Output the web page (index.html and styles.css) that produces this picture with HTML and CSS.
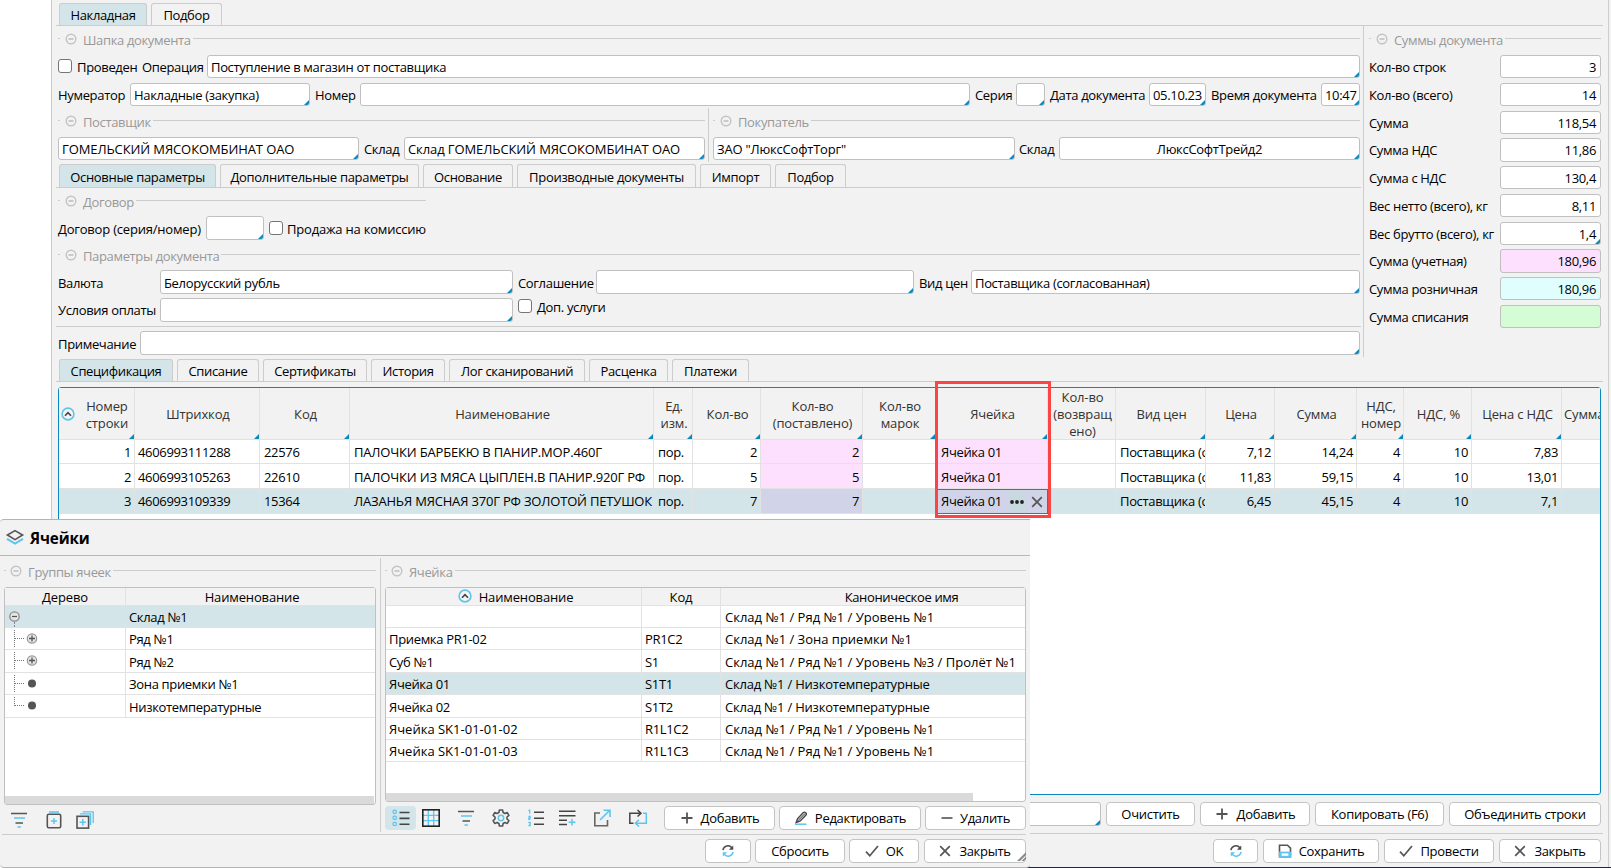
FILE: index.html
```html
<!DOCTYPE html>
<html lang="ru">
<head>
<meta charset="utf-8">
<title>Накладная</title>
<link rel="stylesheet" href="styles.css">
</head>
<body>
<svg width="0" height="0" class="defs">
  <symbol id="minus-c" viewBox="0 0 12 12"><circle cx="6" cy="6" r="4.8" fill="none" stroke="#c4c4c4" stroke-width="1.4"/><path d="M3.5 6h5" stroke="#b4b4b4" stroke-width="1.3"/></symbol>
  <symbol id="sort" viewBox="0 0 14 14"><circle cx="7" cy="7" r="5.9" fill="#f4f4f4" stroke="#62c3ec" stroke-width="1.6"/><path d="M4 8.8 7 5.6l3 3.2" fill="none" stroke="#444" stroke-width="1.6"/></symbol>
  <symbol id="refresh" viewBox="0 0 16 16"><g fill="none" stroke-width="1.7"><path d="M2.2 7A5.8 5.8 0 0 1 12.4 4.2" stroke="#4a4a4a"/><path d="M13.8 9A5.8 5.8 0 0 1 3.6 11.8" stroke="#5cc5f0"/></g><path d="M14 1.6v5H9z" fill="#4a4a4a"/><path d="M2 14.4v-5h5z" fill="#5cc5f0"/></symbol>
  <symbol id="plus" viewBox="0 0 14 14"><path d="M7 1.5v11M1.5 7h11" stroke="#555" stroke-width="1.8"/></symbol>
  <symbol id="cross" viewBox="0 0 12 12"><path d="M1.2 1.2l9.6 9.6M10.8 1.2 1.2 10.8" stroke="#555" stroke-width="1.7"/></symbol>
  <symbol id="check" viewBox="0 0 14 14"><path d="M1 7.6l3.8 4.2L13 2" fill="none" stroke="#555" stroke-width="1.7"/></symbol>
  <symbol id="funnel" viewBox="0 0 18 18"><path d="M1 2.5h16M5.500 12h7.500" stroke="#555" stroke-width="1.5"/><path d="M4 7h11M7.500 16h3.4" stroke="#5cc5f0" stroke-width="1.5"/></symbol>
</svg>

<div class="doc">
  <div class="tabs tabs-1"><span class="tab on w88">Накладная</span><span class="tab w71">Подбор</span></div>
  <div class="top">
    <div class="left">
      <div class="legend"><i></i><svg><use href="#minus-c"/></svg><b>Шапка документа</b><hr></div>
      <div class="row r-oper"><span class="chk"></span><label>Проведен</label><label>Операция</label><div class="inp mk">Поступление в магазин от поставщика</div></div>
      <div class="row r-num"><label>Нумератор</label><div class="inp mk">Накладные (закупка)</div><label>Номер</label><div class="inp mk"></div><label>Серия</label><div class="inp mk"></div><label>Дата документа</label><div class="inp mk tight">05.10.23</div><label>Время документа</label><div class="inp mk tight">10:47</div></div>
      <div class="parties">
        <div class="party">
          <div class="legend"><i></i><svg><use href="#minus-c"/></svg><b>Поставщик</b><hr></div>
          <div class="row r-sup"><div class="inp mk caps">ГОМЕЛЬСКИЙ МЯСОКОМБИНАТ ОАО</div><label>Склад</label><div class="inp mk caps">Склад ГОМЕЛЬСКИЙ МЯСОКОМБИНАТ ОАО</div></div>
        </div>
        <div class="party second">
          <div class="legend"><i></i><svg><use href="#minus-c"/></svg><b>Покупатель</b><hr></div>
          <div class="row r-buy"><div class="inp mk wide">ЗАО "ЛюксСофтТорг"</div><label>Склад</label><div class="inp mk mid">ЛюксСофтТрейд2</div></div>
        </div>
      </div>
      <div class="tabs tabs-2"><span class="tab on w157">Основные параметры</span><span class="tab w199">Дополнительные параметры</span><span class="tab w90">Основание</span><span class="tab w179">Производные документы</span><span class="tab w71">Импорт</span><span class="tab w71">Подбор</span></div>
      <div class="legend lg-dog"><i></i><svg><use href="#minus-c"/></svg><b>Договор</b><hr></div>
      <div class="row r-dog"><label class="wide">Договор (серия/номер)</label><div class="inp mk"></div><span class="chk"></span><label class="wide">Продажа на комиссию</label></div>
      <div class="legend lg-par"><i></i><svg><use href="#minus-c"/></svg><b>Параметры документа</b><hr></div>
      <div class="row r-cur"><label>Валюта</label><div class="inp mk">Белорусский рубль</div><label>Соглашение</label><div class="inp mk"></div><label>Вид цен</label><div class="inp mk">Поставщика (согласованная)</div></div>
      <div class="row r-pay"><label>Условия оплаты</label><div class="inp mk"></div><span class="chk"></span><label class="up">Доп. услуги</label></div>
      <div class="sep"></div>
      <div class="row r-note"><label>Примечание</label><div class="inp mk"></div></div>
    </div>
    <div class="sums">
      <div class="legend"><i></i><svg><use href="#minus-c"/></svg><b>Суммы документа</b><hr></div>
      <div class="sumgrid">
        <label>Кол-во строк</label><div class="inp num">3</div>
        <label>Кол-во (всего)</label><div class="inp num">14</div>
        <label>Сумма</label><div class="inp num">118,54</div>
        <label>Сумма НДС</label><div class="inp num">11,86</div>
        <label>Сумма с НДС</label><div class="inp num">130,4</div>
        <label>Вес нетто (всего), кг</label><div class="inp num">8,11</div>
        <label>Вес брутто (всего), кг</label><div class="inp num mk">1,4</div>
        <label>Сумма (учетная)</label><div class="inp num pink">180,96</div>
        <label>Сумма розничная</label><div class="inp num cyan">180,96</div>
        <label>Сумма списания</label><div class="inp num green"></div>
      </div>
    </div>
  </div>
  <div class="tabs tabs-3"><span class="tab on w114">Спецификация</span><span class="tab w82">Списание</span><span class="tab w104">Сертификаты</span><span class="tab w74">История</span><span class="tab w136">Лог сканирований</span><span class="tab w79">Расценка</span><span class="tab w77">Платежи</span></div>
  <div class="spec">
    <div class="gr head">
      <div class="first"><svg><use href="#sort"/></svg><span>Номер<br>строки</span></div><div>Штрихкод</div><div>Код</div><div>Наименование</div><div>Ед.<br>изм.</div><div>Кол-во</div><div>Кол-во<br>(поставлено)</div><div>Кол-во<br>марок</div><div>Ячейка</div><div class="nomk">Кол-во<br>(возвращ<br>ено)</div><div>Вид цен</div><div>Цена</div><div>Сумма</div><div>НДС,<br>номер</div><div>НДС, %</div><div>Цена с НДС</div><div class="cut nomk">Сумма</div>
    </div>
    <div class="gr"><div class="n">1</div><div class="bar">4606993111288</div><div>22576</div><div class="caps">ПАЛОЧКИ БАРБЕКЮ В ПАНИР.МОР.460Г</div><div>пор.</div><div class="n">2</div><div class="n pink">2</div><div></div><div class="pink cell">Ячейка 01</div><div></div><div>Поставщика (с</div><div class="n">7,12</div><div class="n">14,24</div><div class="n">4</div><div class="n">10</div><div class="n">7,83</div><div></div></div>
    <div class="gr tall"><div class="n">2</div><div class="bar">4606993105263</div><div>22610</div><div class="caps">ПАЛОЧКИ ИЗ МЯСА ЦЫПЛЕН.В ПАНИР.920Г РФ</div><div>пор.</div><div class="n">5</div><div class="n pink">5</div><div></div><div class="pink cell">Ячейка 01</div><div></div><div>Поставщика (с</div><div class="n">11,83</div><div class="n">59,15</div><div class="n">4</div><div class="n">10</div><div class="n">13,01</div><div></div></div>
    <div class="gr tall sel"><div class="n">3</div><div class="bar">4606993109339</div><div>15364</div><div class="caps">ЛАЗАНЬЯ МЯСНАЯ 370Г РФ ЗОЛОТОЙ ПЕТУШОК</div><div>пор.</div><div class="n">7</div><div class="n lilac">7</div><div></div><div class="lilac edit">Ячейка 01<span class="dots"><svg viewBox="0 0 14 4"><circle cx="2" cy="2" r="1.9"/><circle cx="7" cy="2" r="1.9"/><circle cx="12" cy="2" r="1.9"/></svg></span><svg class="x"><use href="#cross"/></svg></div><div></div><div>Поставщика (с</div><div class="n">6,45</div><div class="n">45,15</div><div class="n">4</div><div class="n">10</div><div class="n">7,1</div><div></div></div>
    <div class="mark"></div>
  </div>
  <div class="foot f1"><div class="inp mk f-in"></div><button class="w89">Очистить</button><button class="w110"><svg class="i14 ic"><use href="#plus"/></svg>Добавить</button><button class="w129">Копировать (F6)</button><button class="w152">Объединить строки</button></div>
  <div class="foot f2"><button class="w45"><svg class="i14"><use href="#refresh"/></svg></button><button class="w116"><svg class="i14 near" viewBox="0 0 14 14"><path d="M1.5 12.8V1.2h8l3 3v8.6z" fill="none" stroke="#555" stroke-width="1.6"/><path d="M1 7.6h12v5.6H1z" fill="#5cc5f0"/><path d="M3.6 9.4h6.8v2.4H3.6z" fill="#fff"/></svg>Сохранить</button><button class="w110"><svg class="i14 near"><use href="#check"/></svg>Провести</button><button class="w102"><svg class="i12 ic"><use href="#cross"/></svg>Закрыть</button></div>
</div>

<div class="dialog">
  <div class="title"><svg viewBox="0 0 20 18"><path d="M2 10.8 10 15.6l8-4.8" fill="none" stroke="#5cc5f0" stroke-width="2"/><path d="M10 2.6 17.6 7 10 11.6 2.4 7z" fill="#f2f2f2" stroke="#555" stroke-width="1.6"/></svg>Ячейки</div>
  <div class="body">
    <div class="tree">
      <div class="legend"><i></i><svg><use href="#minus-c"/></svg><b>Группы ячеек</b><hr></div>
      <div class="box tbox">
        <div class="tg th"><div>Дерево</div><div class="shift">Наименование</div></div>
        <div class="tg sel"><div><svg viewBox="0 0 44 22"><path d="M9.5 16v6" stroke="#888" stroke-dasharray="2 1"/><circle cx="9.5" cy="10.5" r="4.7" fill="#e4e4e4" stroke="#8a8a8a" stroke-width="1.3"/><path d="M7 10.5h5" stroke="#555" stroke-width="1.2"/></svg></div><div>Склад №1</div></div>
        <div class="tg"><div><svg viewBox="0 0 44 22"><path d="M9.5 2v18M10 10.5h9" stroke="#777" fill="none" stroke-dasharray="1 1"/><circle cx="27" cy="10.5" r="4.7" fill="#e4e4e4" stroke="#999" stroke-width="1.2"/><path d="M24 10.5h6M27 7.5v6" stroke="#555" stroke-width="1.3"/></svg></div><div>Ряд №1</div></div>
        <div class="tg h23"><div><svg viewBox="0 0 44 22"><path d="M9.5 2v18M10 10.5h9" stroke="#777" fill="none" stroke-dasharray="1 1"/><circle cx="27" cy="10.5" r="4.7" fill="#e4e4e4" stroke="#999" stroke-width="1.2"/><path d="M24 10.5h6M27 7.5v6" stroke="#555" stroke-width="1.3"/></svg></div><div>Ряд №2</div></div>
        <div class="tg"><div><svg viewBox="0 0 44 22"><path d="M9.5 2v18M10 10.5h9" stroke="#777" fill="none" stroke-dasharray="1 1"/><circle cx="27" cy="10.5" r="4" fill="#555"/></svg></div><div>Зона приемки №1</div></div>
        <div class="tg h23"><div><svg viewBox="0 0 44 22"><path d="M9.5 2v9M10 10.5h9" stroke="#777" fill="none" stroke-dasharray="1 1"/><circle cx="27" cy="10.5" r="4" fill="#555"/></svg></div><div>Низкотемпературные</div></div>
        <div class="scroll"></div>
      </div>
      <div class="tools tl">
        <svg class="i18"><use href="#funnel"/></svg>
        <svg class="i18" viewBox="0 0 18 18"><path d="M4 1h10" stroke="#5cc5f0" stroke-width="1.6"/><rect x="2.3" y="3.3" width="13.4" height="13.4" rx="1.5" fill="none" stroke="#555" stroke-width="1.6"/><path d="M9 7v6M6 10h6" stroke="#5cc5f0" stroke-width="1.4"/></svg>
        <svg class="i18" viewBox="0 0 18 18"><path d="M4 2.9h10.6V14M6.5.8H17.2V12" fill="none" stroke="#5cc5f0" stroke-width="1.3"/><rect x="1" y="5.3" width="11.6" height="11.8" fill="none" stroke="#555" stroke-width="1.6"/><path d="M6.8 8v6.4M3.6 11.2H10" stroke="#5cc5f0" stroke-width="1.5"/></svg>
      </div>
    </div>
    <div class="cells">
      <div class="legend"><i></i><svg><use href="#minus-c"/></svg><b>Ячейка</b><hr></div>
      <div class="box cbox">
        <div class="cg th"><div class="c"><svg><use href="#sort"/></svg>Наименование</div><div>Код</div><div class="canon">Каноническое имя</div></div>
        <div class="cg"><div></div><div></div><div class="lng">Склад №1 / Ряд №1 / Уровень №1</div></div>
        <div class="cg"><div>Приемка PR1-02</div><div>PR1C2</div><div class="lng">Склад №1 / Зона приемки №1</div></div>
        <div class="cg h23"><div>Суб №1</div><div>S1</div><div class="lng">Склад №1 / Ряд №1 / Уровень №3 / Пролёт №1</div></div>
        <div class="cg sel"><div>Ячейка 01</div><div>S1T1</div><div class="lng low">Склад №1 / Низкотемпературные</div></div>
        <div class="cg h23"><div>Ячейка 02</div><div>S1T2</div><div class="lng low">Склад №1 / Низкотемпературные</div></div>
        <div class="cg"><div class="lng">Ячейка SK1-01-01-02</div><div>R1L1C2</div><div class="lng">Склад №1 / Ряд №1 / Уровень №1</div></div>
        <div class="cg"><div class="lng">Ячейка SK1-01-01-03</div><div>R1L1C3</div><div class="lng">Склад №1 / Ряд №1 / Уровень №1</div></div>
        <div class="scroll"></div>
      </div>
      <div class="tools tr">
        <span class="act"><svg class="i18" viewBox="0 0 18 18"><g fill="none" stroke="#5cc5f0" stroke-width="1.2"><rect x="1.1" y="1.1" width="3.2" height="3.2" rx="1"/><rect x="1.1" y="7.2" width="3.2" height="3.2" rx="1"/><rect x="1.1" y="13.3" width="3.2" height="3.2" rx="1"/></g><path d="M7.500 3.500h10M7.500 9.400h10M7.500 15.300h10" stroke="#444" stroke-width="1.6"/></svg></span>
        <svg class="i18" viewBox="0 0 18 18"><path d="M6.3 1v16M11.7 1v16M1 6.3h16M1 11.7h16" stroke="#5cc5f0" stroke-width="1.3"/><rect x=".8" y=".8" width="16.4" height="16.4" fill="none" stroke="#222" stroke-width="1.6"/></svg>
        <svg class="i18"><use href="#funnel"/></svg>
        <svg class="i18" viewBox="0 0 18 18"><path d="M7.4 1h3.2l.5 2.5 1.8 1 2.4-.9 1.6 2.8-1.9 1.6v2l1.9 1.6-1.6 2.8-2.4-.9-1.8 1-.5 2.5H7.4l-.5-2.5-1.8-1-2.4.9-1.6-2.8L3 10V8L1.1 6.4l1.6-2.8 2.4.9 1.8-1z" fill="none" stroke="#555" stroke-width="1.6" stroke-linejoin="round"/><circle cx="9" cy="9" r="2.7" fill="none" stroke="#5cc5f0" stroke-width="1.5"/></svg>
        <svg class="i18 numbered" viewBox="0 0 18 18"><path d="M7 3.2h10M7 9.2h10M7 15.2h10" stroke="#444" stroke-width="1.5"/><path d="M1.5 1.8l1.2-.8v3.800M1.400 7.300h1.800v1.500H1.800v1.600h1.600M1.400 13.300h1.800v3.400H1.400M1.800 15h1.300" fill="none" stroke="#5cc5f0" stroke-width="1.2"/></svg>
        <svg class="i18" viewBox="0 0 18 18"><path d="M1 2.3h16.5M1 6.700h16.500M1 11.200h8M1 15.600h8" stroke="#444" stroke-width="1.5"/><path d="M14 9.800v6.800M10.600 13.200h6.800" stroke="#5cc5f0" stroke-width="1.5"/></svg>
        <svg class="i18" viewBox="0 0 18 18"><path d="M7 4H1.8v12.800h12.700V11" fill="none" stroke="#666" stroke-width="1.6"/><path d="M7 11 16.500 1.500M10.500 1.200H17V8" fill="none" stroke="#5cc5f0" stroke-width="1.6"/></svg>
        <svg class="i20" viewBox="0 0 20 18"><path d="M5.500 14.200H1.800V4.200H12M9.500 1l3.500 3.200-3.500 3.300" fill="none" stroke="#444" stroke-width="1.5"/><path d="M15 4.200h3.300v10H8M11 10.800l-3.600 3.400 3.600 3.300" fill="none" stroke="#5cc5f0" stroke-width="1.5"/></svg>
        <div class="btns"><button class="w111"><svg class="i14 near"><use href="#plus"/></svg>Добавить</button><button class="w142"><svg class="i14 near" viewBox="0 0 14 14"><path d="M1 13.2h11.5" stroke="#5cc5f0" stroke-width="1.5"/><path d="M2.200 11.500 3.400 7.800 9.300 1.600Q10.500.6 11.700 1.700T12 4L6 10.200z" fill="#ddd" stroke="#444" stroke-width="1.3"/><path d="M2.200 11.500 11 2.500" stroke="#444"/></svg>Редактировать</button><button class="w101"><svg class="i12 near" viewBox="0 0 12 12"><path d="M.5 6h11" stroke="#666" stroke-width="1.8"/></svg>Удалить</button></div>
      </div>
    </div>
  </div>
  <div class="dfoot"><button class="w46"><svg class="i14"><use href="#refresh"/></svg></button><button class="w90">Сбросить</button><button class="w70"><svg class="i14 near"><use href="#check"/></svg>OK</button><button class="w102 last"><svg class="i12 ic"><use href="#cross"/></svg>Закрыть</button></div>
  <svg class="grip" viewBox="0 0 9 9"><path d="M0 9 9 0v3L3 9zM4.5 9 9 4.5V7L7 9z" fill="#888"/></svg>
</div>
</body>
</html>
```

FILE: styles.css
```css
* { box-sizing: border-box; }
body { margin: 0; width: 1611px; height: 868px; position: relative; overflow: hidden; background: #fff; color: #000;
  font: 13px/17px "Open Sans", "Noto Sans", sans-serif; letter-spacing: -0.33px; white-space: nowrap; }
svg { flex: none; display: block; }
.defs { position: absolute; }

.doc { margin-left: 51px; width: 1560px; height: 868px; background: #f2f2f2; border-left: 1px solid #ccc; border-bottom: 1px solid #1d2540; padding-left: 4px;
  display: flex; flex-direction: column; box-shadow: inset -2px 0 0 #f2f2f2, inset -3px 0 0 #ccc; }

.tabs { display: flex; gap: 4px; padding-left: 3px; border-bottom: 1px solid #ccc; align-items: flex-end; flex: none; letter-spacing: -0.35px; }
.tabs-1 { height: 26px; width: 1547px; }
.tabs-2 { height: 24px; width: 1305px; letter-spacing: -0.3px; }
.tabs-3 { height: 25px; width: 1547px; }
.tab { height: 22px; border: 1px solid #ccc; border-bottom: 0; border-radius: 3px 3px 0 0; text-align: center; line-height: 22px; }
.tabs-2 .tab { height: 23px; line-height: 24px; }
.tab.on { background: #d3e5e9; }

.top { display: flex; height: 331px; flex: none; }
.left { width: 1307px; padding-left: 2px; display: flex; flex-direction: column; }
.left > * { flex: none; }
.legend { display: flex; align-items: center; height: 13px; color: #999; margin-top: 6px; letter-spacing: -0.35px; }
.legend i { width: 2px; height: 1px; background: #ccc; margin-right: 5px; }
.legend svg { width: 12px; height: 12px; margin-right: 6px; }
.legend b { font-weight: normal; padding-top: 4px; margin-right: 2px; }
.legend hr { flex: 1; height: 1px; border: 0; margin: 0; background: #ccc; }
.left > .legend, .party .legend { width: 1302px; }

.row { display: grid; width: 1302px; height: 23px; align-items: stretch; }
label { padding-top: 3px; line-height: 18px; }
.inp { background: #fff; border: 1px solid #c0c0c0; border-radius: 3px; padding: 3px 4px 0 3px; line-height: 17px; position: relative; overflow: hidden; }
.mk::after, .head > div:not(.nomk)::after { content: ""; position: absolute; right: 0; bottom: 0; width: 5px; height: 5px; background: #0b88bd; clip-path: polygon(100% 0, 100% 100%, 0 100%); }
.inp.mid { text-align: center; padding-left: 4px; }
.chk { width: 14px; height: 14px; border: 1px solid #767676; border-radius: 3px; background: #fff; margin-top: 4px; }
.caps { letter-spacing: -0.18px; }
.inp.caps { letter-spacing: -0.1px; }
.wide { letter-spacing: -0.2px; }

.r-oper { margin-top: 10px; grid-template-columns: 19px 65px 65px 1fr; }
.r-num { margin-top: 5px; grid-template-columns: 72px 185px 45px 615px 41px 34px 99px 62px 110px 39px; }
.r-num .inp { margin-right: 5px; }
.r-num .inp:last-child { margin-right: 0; }
.r-num .tight { padding-left: 3px; padding-right: 0; }

.parties { display: flex; margin-top: 2px; height: 54px; }
.party { width: 651px; border-right: 1px solid #ccc; padding-right: 3px; }
.party.second { border: 0; padding: 0 0 0 4px; width: 651px; }
.party .legend { width: auto; }
.party .row { width: auto; margin-top: 10px; }
.r-sup { grid-template-columns: 301px 39px 1fr; column-gap: 3px; }
.r-sup label { padding-left: 2px; }
.r-buy label { padding-left: 1px; }
.r-buy { grid-template-columns: 302px 38px 1fr; column-gap: 3px; }
.left > .tabs-2 { margin-top: 2px; margin-left: -2px; }

.left > .lg-dog { width: 368px; }
.r-dog { margin-top: 9px; height: 24px; grid-template-columns: 148px 58px 13px 1fr; }
.r-dog .chk { margin: 5px 0 0 5px; }
.r-dog label { padding-top: 4px; }
.r-dog label:last-child { padding-left: 10px; }
.left > .lg-par { margin-top: 8px; }
.r-cur { margin-top: 9px; height: 24px; grid-template-columns: 102px 358px 78px 323px 52px 1fr; }
.r-cur label, .r-note label { padding-top: 4px; }
.r-cur .inp { padding-top: 4px; }
.r-cur .inp:not(:last-child) { margin-right: 5px; }
.r-pay { margin-top: 4px; height: 24px; grid-template-columns: 102px 353px 24px 1fr; }
.r-pay .chk { margin: 1px 0 0 5px; }
.r-pay .up { padding-top: 0; }
.sep { height: 1px; background: #ccc; margin: 4px 0 4px -2px; width: 1305px; }
.r-note { height: 24px; grid-template-columns: 82px 1fr; }

.sums { border-left: 1px solid #ccc; padding-left: 5px; width: 238px; }
.sumgrid { display: grid; grid-template-columns: 131px 101px; grid-auto-rows: 23.4px; row-gap: 4.36px; margin-top: 10px; }
.num { text-align: right; }
.pink { background: #fde0fd; }
.cyan { background: #e0fefe; }
.green { background: #d4fdd6; }
.lilac { background: #d1d4e8; }

.spec { position: relative; margin: 5px 0 0 2px; width: 1543px; height: 408px; background: #fff; border: 1px solid #0b88bd; border-radius: 3px; flex: none; }
.gr { display: grid; grid-template-columns: 76px 125px 90px 304px 39px 68px 102px 73px 112px 68px 90px 69px 82px 47px 68px 90px 38px; height: 24px; }
.gr > div { border-right: 1px solid #e2e2e2; border-bottom: 1px solid #e2e2e2; padding: 3px 3px 0 4px; overflow: hidden; line-height: 18px; position: relative; }
.gr > div:last-child { border-right: 0; }
.gr > .bar { padding-left: 3px; }
.gr > .cell { padding-left: 5px; }
.gr.tall { height: 25px; }
.gr.tall > div { padding-top: 4px; }
.gr.tall.sel > div { padding-top: 3px; }
.gr .n { text-align: right; }
.gr.head { height: 52px; background: #f2f2f2; color: #333; }
.gr.head > div { display: flex; align-items: center; justify-content: center; text-align: center; line-height: 17px; padding: 2px 0 0 2px; letter-spacing: -0.15px; }
.gr.head .first { justify-content: space-between; padding: 2px 6px 0 2px; }
.first svg { width: 14px; height: 14px; margin-bottom: 2px; }
.gr.head .cut { justify-content: flex-start; padding-left: 2px; }
.sel, .gr.sel { background: #d3e5e9; }
.gr .edit { border: 1px solid #0b88bd; padding-left: 4px; padding-right: 4px; display: flex; }
.gr.tall.sel .edit { padding-top: 2px; }
.dots { width: 20px; height: 21px; margin: -1px 5px 0 7px; border-radius: 4px; background: #c8dadf; display: flex; align-items: center; justify-content: center; }
.dots svg { width: 14px; height: 4px; fill: #222; }
.edit .x { width: 12px; height: 12px; margin-top: 4px; }
.mark { position: absolute; left: 876px; top: -7px; width: 116px; height: 137px; border: 3px solid #fb4444; }

button { height: 24px; border: 1px solid #c4c4c4; border-radius: 4px; background: #fff; color: #000; font: inherit; letter-spacing: -0.3px; padding: 1px 0 0; display: flex; align-items: center; justify-content: center; flex: none; }
button svg { margin-top: -2px; }
.i12 { width: 12px; height: 12px; }
.i14 { width: 14px; height: 14px; }
.i18 { width: 18px; height: 18px; }
.i20 { width: 20px; height: 18px; }
.ic { margin-right: 8px; }
.near { margin-right: 7px; }
.foot { display: flex; justify-content: flex-end; gap: 5px; width: 1545px; flex: none; }
.f1 { padding-top: 7px; height: 39px; border-bottom: 1px solid #ccc; width: 1547px; padding-right: 2px; }
.f-in { width: 101px; height: 24px; }
.f2 { padding-top: 5px; }

.dialog { position: absolute; left: 0; top: 519px; width: 1030px; height: 349px; background: #f2f2f2; border-top: 1px solid #b4b4b4; border-bottom: 1px solid #b4b4b4; border-radius: 4px 0 4px 4px; display: flex; flex-direction: column; }
.title { height: 36px; border-bottom: 1px solid #b8b8b8; display: flex; align-items: center; gap: 5px; padding: 1px 0 0 5px; font-size: 15.2px; font-weight: 700; letter-spacing: -0.1px; }
.title svg { width: 20px; height: 18px; margin-top: -2px; }
.body { display: flex; height: 279px; border-bottom: 1px solid #ccc; margin: 0 4px 0 2px; }
.tree { width: 379px; margin-top: 2px; margin-bottom: 2px; border-right: 1px solid #ccc; padding: 0 4px 0 2px; }
.cells { padding-left: 4px; width: 645px; margin-top: 2px; }
.body .legend { margin-top: 6px; }
.body .legend i { margin-right: 4px; }
.box { background: #fff; border: 1px solid #c0c0c0; border-radius: 3px; margin-top: 10px; display: flex; flex-direction: column; }
.tbox { width: 372px; height: 218px; }
.cbox { width: 641px; height: 215px; }
.tg { display: grid; grid-template-columns: 121px 1fr; height: 22px; flex: none; }
.cg { display: grid; grid-template-columns: 256px 79px 1fr; height: 22px; flex: none; }
.h23 { height: 23px; }
.box .th { height: 18px; background: #f2f2f2; text-align: center; }
.tg > div, .cg > div { border-right: 1px solid #e2e2e2; border-bottom: 1px solid #e2e2e2; padding: 2px 0 0 3px; line-height: 18px; overflow: hidden; }
.cg > .lng:last-child { padding-left: 4px; }
.h23 > div { padding-top: 3px; }
.tg > div:last-child, .cg > div:last-child { border-right: 0; }
.box .th > div { padding: 0; letter-spacing: -0.15px; }
.box .th > .shift { padding-left: 3px; }
.box .th > .canon { padding-left: 57px; letter-spacing: -0.35px; }
.tg:not(.th) > div:first-child { padding: 0; }
.tg svg { width: 44px; height: 22px; }
.box .th > .c { display: flex; justify-content: center; gap: 7px; padding-left: 4px; }
.th .c svg { width: 14px; height: 14px; margin-top: 1px; }
.cg .lng { letter-spacing: 0; }
.cg .low { letter-spacing: -0.22px; }
.scroll { height: 8px; background: #dadada; margin-top: auto; width: 369px; }
.cbox .scroll { width: 587px; }
.tools { display: flex; align-items: center; }
.tl { padding: 6px 0 0 6px; gap: 17px; }
.tl svg:last-child { margin-left: -4px; }
.tr { padding-top: 4px; }
.act { width: 31px; height: 24px; border-radius: 4px; background: #d3e5e9; display: flex; align-items: center; justify-content: center; margin-right: 6px; }
.tr > svg { margin-right: 17px; }
.tr > .numbered { margin-right: 13px; }
.tr > .i20 { margin-right: 0; }
.btns { display: flex; gap: 4px; margin-left: auto; }
.dfoot { display: flex; justify-content: flex-end; gap: 4px; padding: 4px 4px 0 0; }
.last { margin-left: 1px; }
.grip { position: absolute; right: 4px; bottom: 6px; width: 9px; height: 9px; }

.w45 { width: 45px; } .w46 { width: 46px; } .w70 { width: 70px; } .w71 { width: 71px; } .w74 { width: 74px; } .w77 { width: 77px; } .w79 { width: 79px; }
.w82 { width: 82px; } .w88 { width: 88px; } .w89 { width: 89px; } .w90 { width: 90px; } .w101 { width: 101px; } .w102 { width: 102px; }
.w104 { width: 104px; } .w110 { width: 110px; } .w111 { width: 111px; } .w114 { width: 114px; } .w116 { width: 116px; } .w129 { width: 129px; }
.w136 { width: 136px; } .w142 { width: 142px; } .w152 { width: 152px; } .w157 { width: 157px; } .w179 { width: 179px; } .w199 { width: 199px; }
```
